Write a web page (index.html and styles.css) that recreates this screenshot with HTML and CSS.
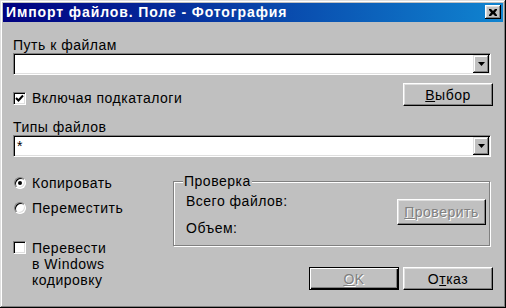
FILE: index.html
```html
<!DOCTYPE html>
<html lang="ru">
<head>
  <meta charset="UTF-8">
  <title>Импорт файлов</title>
  <link rel="stylesheet" href="styles.css">
</head>
<body>
  <div class="window">
    <div class="titlebar">
      <span class="title">Импорт файлов. Поле - Фотография</span>
      <button class="close-btn">
        <svg width="8" height="7" viewBox="0 0 8 7"><path d="M0 0h2l2 2 2-2h2v1L6 3.5 8 6v1H6L4 5 2 7H0V6l2-2.5L0 1z" fill="#000"/></svg>
      </button>
    </div>

    <div class="content">
      <div class="field-label">Путь к файлам</div>
      <div class="combo">
        <span class="combo-value"></span>
        <span class="combo-arrow"><svg width="7" height="4" viewBox="0 0 7 4"><path d="M0 0h7L3.5 4z" fill="#000"/></svg></span>
      </div>

      <div class="row-include">
        <label class="check">
          <span class="checkbox"><svg width="9" height="9" viewBox="0 0 9 9"><path d="M1 4l2.5 2.5L8 1.5" fill="none" stroke="#000" stroke-width="2"/></svg></span>
          Включая подкаталоги
        </label>
        <button class="btn"><u>В</u>ыбор</button>
      </div>

      <div class="field-label label-types">Типы файлов</div>
      <div class="combo">
        <span class="combo-value">*</span>
        <span class="combo-arrow"><svg width="7" height="4" viewBox="0 0 7 4"><path d="M0 0h7L3.5 4z" fill="#000"/></svg></span>
      </div>

      <div class="lower">
        <div class="options">
          <label class="radio-row"><span class="radio checked"></span>Копировать</label>
          <label class="radio-row radio-second"><span class="radio"></span>Переместить</label>
          <label class="check check-multi">
            <span class="checkbox"></span>
            <span>Перевести<br>в Windows<br>кодировку</span>
          </label>
        </div>

        <div class="side">
          <fieldset class="group">
            <legend>Проверка</legend>
            <div class="group-body">
              <div class="stats">
                <div>Всего файлов:</div>
                <div class="stat-volume">Объем:</div>
              </div>
              <button class="btn btn-check" disabled><u>П</u>роверить</button>
            </div>
          </fieldset>
          <div class="actions">
            <button class="btn btn-default" disabled><u>O</u>K</button>
            <button class="btn">О<u>т</u>каз</button>
          </div>
        </div>
      </div>
    </div>
  </div>
</body>
</html>
```

FILE: styles.css
```css
:root {
  --face: #c0c0c0;
  --light: #dfdfdf;
  --shadow: #808080;
  --dark: #000;
}

body {
  margin: 0;
  background: var(--face);
  font-family: "Liberation Sans", Arial, sans-serif;
  font-size: 14px;
  letter-spacing: 0.5px;
  color: #000;
}

.window {
  width: 506px;
  height: 308px;
  box-sizing: border-box;
  padding: 3px;
  background: var(--face);
  box-shadow: inset -1px -1px var(--dark), inset 1px 1px var(--light),
              inset -2px -2px var(--shadow), inset 2px 2px #fff;
}

.titlebar {
  height: 19px;
  display: flex;
  align-items: flex-start;
  justify-content: space-between;
  background: linear-gradient(to right, #000080, #1084d0);
  padding-left: 3px;
}

.title {
  color: #fff;
  font-weight: bold;
  line-height: 19px;
  letter-spacing: 0.9px;
}

.close-btn {
  width: 16px;
  height: 14px;
  margin: 2px 2px 0 0;
  padding: 0;
  border: 0;
  background: var(--face);
  display: flex;
  align-items: center;
  justify-content: center;
  box-shadow: inset -1px -1px var(--dark), inset 1px 1px #fff,
              inset -2px -2px var(--shadow), inset 2px 2px var(--light);
}

.content {
  padding: 15px 10px 0 10px;
}

.field-label {
  line-height: 16px;
}

.label-types {
  margin-top: 13px;
}

.combo {
  height: 22px;
  margin-right: 2px;
  box-sizing: border-box;
  background: #fff;
  border: 1px solid;
  border-color: var(--shadow) #fff #fff var(--shadow);
  box-shadow: inset 1px 1px var(--dark), inset -1px -1px var(--light);
  padding: 1px;
  display: flex;
}

.combo-value {
  flex: 1;
  line-height: 16px;
  padding: 1px 0 0 2px;
}

.combo-arrow {
  width: 16px;
  background: var(--face);
  display: flex;
  align-items: center;
  justify-content: center;
  box-shadow: inset -1px -1px var(--dark), inset 1px 1px var(--light),
              inset -2px -2px var(--shadow), inset 2px 2px #fff;
}

.row-include {
  margin-top: 8px;
  display: flex;
  justify-content: space-between;
  align-items: flex-end;
}

.check,
.radio-row {
  display: flex;
  align-items: center;
  gap: 6px;
  line-height: 16px;
}

.checkbox {
  width: 13px;
  height: 13px;
  box-sizing: border-box;
  background: #fff;
  border: 1px solid;
  border-color: var(--shadow) #fff #fff var(--shadow);
  box-shadow: inset 1px 1px var(--dark), inset -1px -1px var(--light);
  display: flex;
  align-items: center;
  justify-content: center;
}

.btn {
  width: 90px;
  height: 23px;
  padding: 0;
  font: inherit;
  letter-spacing: inherit;
  color: #000;
  background: var(--face);
  border: 1px solid;
  border-color: #fff var(--dark) var(--dark) #fff;
  box-shadow: inset -1px -1px var(--shadow), inset 1px 1px var(--light);
}

.btn:disabled {
  color: var(--shadow);
  text-shadow: 1px 1px #fff;
}

.btn-default {
  border-color: var(--dark);
  box-shadow: inset 1px 1px #fff, inset -1px -1px var(--dark),
              inset -2px -2px var(--shadow);
}

.lower {
  margin-top: 16px;
  display: grid;
  grid-template-columns: 160px 1fr;
}

.radio-row {
  margin-top: 2px;
}

.radio-second {
  margin-top: 9px;
}

.radio {
  width: 12px;
  height: 12px;
  box-sizing: border-box;
  margin-left: 1px;
  border-radius: 50%;
  background: #fff;
  border: 1px solid;
  border-color: var(--shadow) #fff #fff var(--shadow);
  box-shadow: inset 1px 1px var(--dark), inset -1px -1px var(--light);
  display: flex;
  align-items: center;
  justify-content: center;
}

.radio.checked::after {
  content: "";
  width: 4px;
  height: 4px;
  border-radius: 50%;
  background: #000;
}

.check-multi {
  margin-top: 24px;
  align-items: flex-start;
}

.check-multi .checkbox {
  margin-top: 1px;
}

.group {
  margin: 0 3px 0 0;
  padding: 4px 3px 9px 12px;
  min-width: 0;
  border: 1px solid var(--shadow);
  box-shadow: inset 1px 1px #fff, 1px 1px 0 #fff;
}

.group legend {
  padding: 0 1px;
  margin-left: -3px;
  line-height: 16px;
  background: var(--face);
}

.group-body {
  display: flex;
  justify-content: space-between;
  align-items: flex-start;
}

.stats {
  line-height: 16px;
}

.stat-volume {
  margin-top: 11px;
}

.btn-check {
  width: 89px;
  height: 26px;
  margin-top: 6px;
}

.actions {
  margin-top: 21px;
  display: flex;
  justify-content: flex-end;
  gap: 4px;
}
```
